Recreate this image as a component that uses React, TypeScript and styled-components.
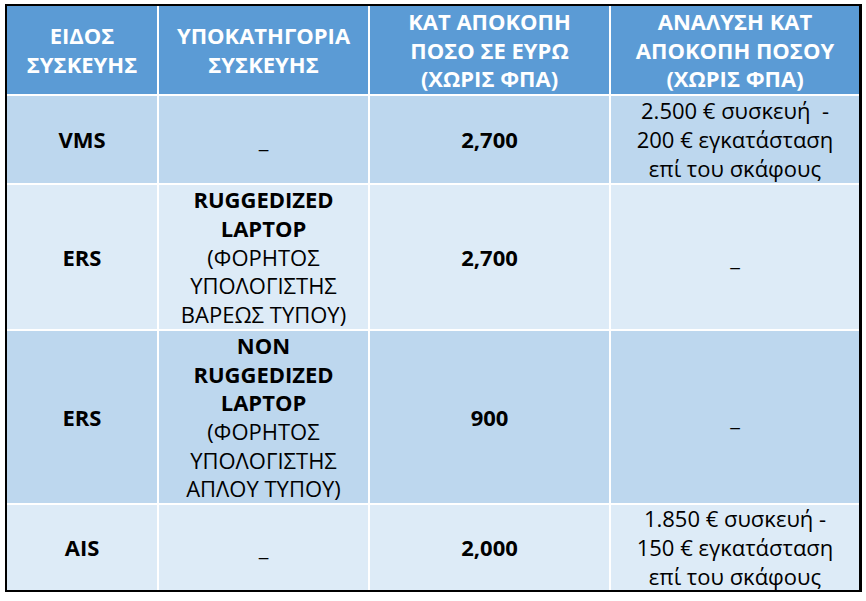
import React from "react";
import styled, { createGlobalStyle } from "styled-components";

const GlobalStyle = createGlobalStyle`
  html, body {
    margin: 0;
    padding: 0;
    background: #ffffff;
  }
  body {
    font-family: "Open Sans", "Noto Sans", "DejaVu Sans", sans-serif;
  }
`;

type Part = { text: string; bold?: boolean };
type Cell = Part[];

const HEADERS: string[][] = [
  ["ΕΙΔΟΣ", "ΣΥΣΚΕΥΗΣ"],
  ["ΥΠΟΚΑΤΗΓΟΡΙΑ", "ΣΥΣΚΕΥΗΣ"],
  ["ΚΑΤ ΑΠΟΚΟΠΗ", "ΠΟΣΟ ΣΕ ΕΥΡΩ", "(ΧΩΡΙΣ ΦΠΑ)"],
  ["ΑΝΑΛΥΣΗ ΚΑΤ", "ΑΠΟΚΟΠΗ ΠΟΣΟΥ", "(ΧΩΡΙΣ ΦΠΑ)"],
];

const ROWS: { tone: "dark" | "light"; cells: Cell[] }[] = [
  {
    tone: "dark",
    cells: [
      [{ text: "VMS", bold: true }],
      [{ text: "_" }],
      [{ text: "2,700", bold: true }],
      [
        { text: "2.500 € συσκευή  -" },
        { text: "200 € εγκατάσταση" },
        { text: "επί του σκάφους" },
      ],
    ],
  },
  {
    tone: "light",
    cells: [
      [{ text: "ERS", bold: true }],
      [
        { text: "RUGGEDIZED", bold: true },
        { text: "LAPTOP", bold: true },
        { text: "(ΦΟΡΗΤΟΣ" },
        { text: "ΥΠΟΛΟΓΙΣΤΗΣ" },
        { text: "ΒΑΡΕΩΣ ΤΥΠΟΥ)" },
      ],
      [{ text: "2,700", bold: true }],
      [{ text: "_" }],
    ],
  },
  {
    tone: "dark",
    cells: [
      [{ text: "ERS", bold: true }],
      [
        { text: "NON", bold: true },
        { text: "RUGGEDIZED", bold: true },
        { text: "LAPTOP", bold: true },
        { text: "(ΦΟΡΗΤΟΣ" },
        { text: "ΥΠΟΛΟΓΙΣΤΗΣ" },
        { text: "ΑΠΛΟΥ ΤΥΠΟΥ)" },
      ],
      [{ text: "900", bold: true }],
      [{ text: "_" }],
    ],
  },
  {
    tone: "light",
    cells: [
      [{ text: "AIS", bold: true }],
      [{ text: "_" }],
      [{ text: "2,000", bold: true }],
      [
        { text: "1.850 € συσκευή -" },
        { text: "150 € εγκατάσταση" },
        { text: "επί του σκάφους" },
      ],
    ],
  },
];

const Page = styled.div`
  padding: 4px 0 0 5px;
`;

const Grid = styled.div`
  display: grid;
  grid-template-columns: 150px 209px 239px 248px;
  grid-template-rows: 88px 87px 144px 172px 85px;
  gap: 2px;
  width: max-content;
  background: #ffffff;
  border: 2px solid #000000;
  border-right-width: 3px;
`;

const HeadCell = styled.div`
  display: flex;
  flex-direction: column;
  align-items: center;
  justify-content: center;
  background: #5b9bd5;
  color: #ffffff;
  font-size: 22px;
  line-height: 28.7px;
  text-align: center;
`;

const BodyCell = styled.div<{ $tone: "dark" | "light" }>`
  display: flex;
  flex-direction: column;
  align-items: center;
  justify-content: center;
  background: ${({ $tone }) => ($tone === "dark" ? "#bdd7ee" : "#ddebf7")};
  color: #000000;
  font-size: 22px;
  line-height: 28.7px;
  text-align: center;
`;

const Line = styled.span<{ $bold?: boolean }>`
  display: block;
  white-space: pre;
  font-weight: ${({ $bold }) => ($bold ? 700 : 400)};
`;

export default function App() {
  return (
    <Page>
      <GlobalStyle />
      <Grid>
        {HEADERS.map((lines, i) => (
          <HeadCell key={`h${i}`}>
            {lines.map((l, j) => (
              <Line key={j} $bold>
                {l}
              </Line>
            ))}
          </HeadCell>
        ))}
        {ROWS.map((row, r) =>
          row.cells.map((cell, c) => (
            <BodyCell key={`${r}-${c}`} $tone={row.tone}>
              {cell.map((p, j) => (
                <Line key={j} $bold={p.bold}>
                  {p.text}
                </Line>
              ))}
            </BodyCell>
          ))
        )}
      </Grid>
    </Page>
  );
}
